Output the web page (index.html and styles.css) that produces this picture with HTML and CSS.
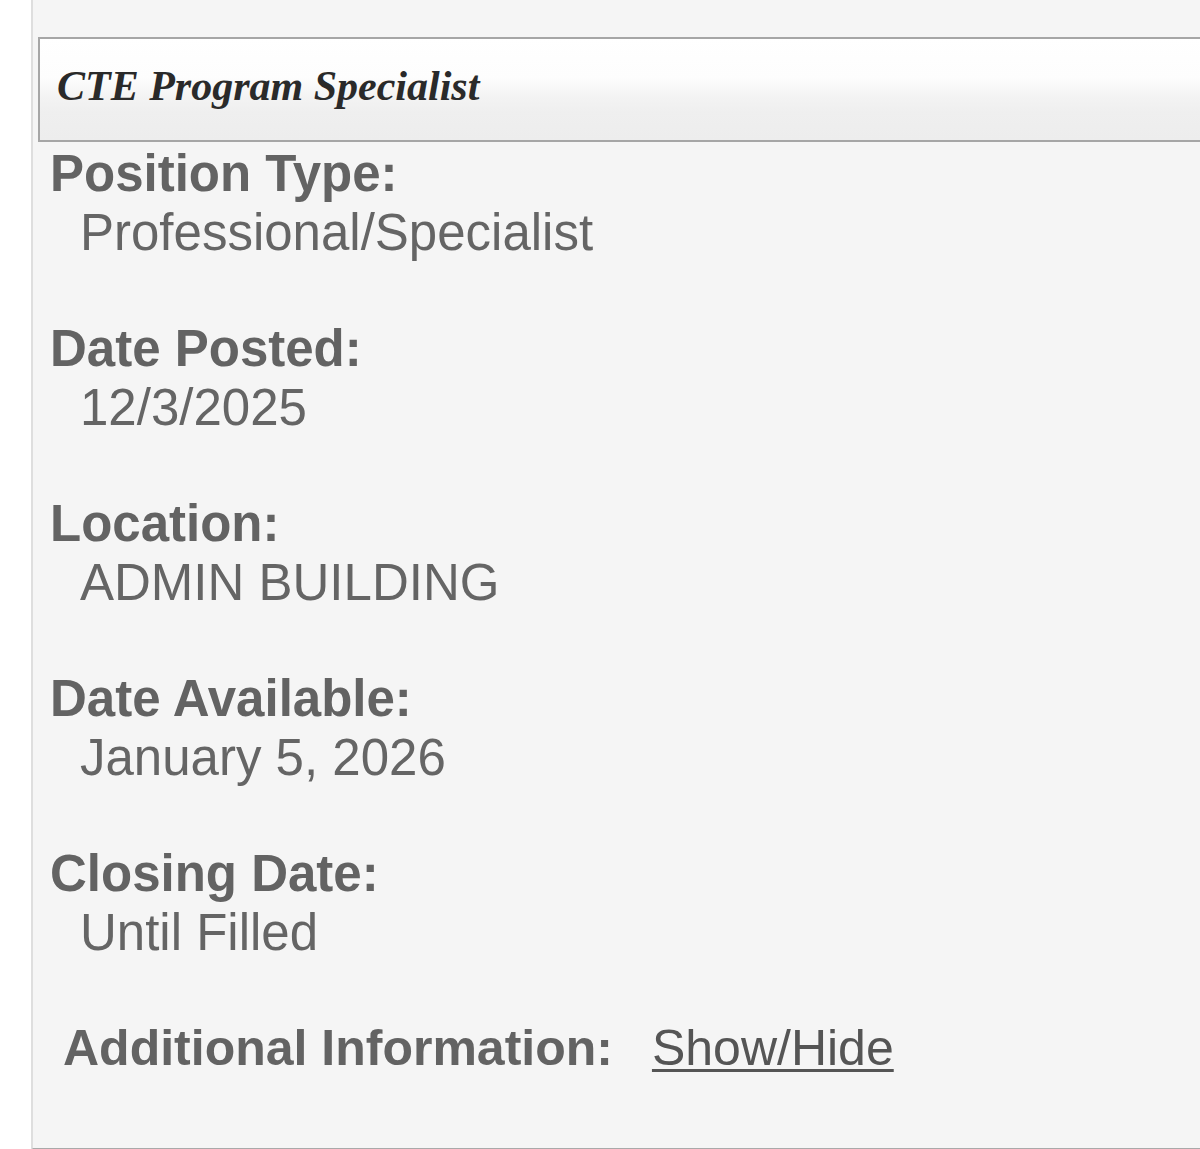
FILE: index.html
```html
<!DOCTYPE html>
<html lang="en">
<head>
<meta charset="utf-8">
<title>CTE Program Specialist</title>
<link rel="stylesheet" href="styles.css">
</head>
<body>
<div class="panel">
  <div class="header">
    <h1 class="title">CTE Program Specialist</h1>
  </div>
  <div class="fields">
    <div class="field">
      <div class="label">Position Type:</div>
      <div class="value">Professional/Specialist</div>
    </div>
    <div class="field">
      <div class="label">Date Posted:</div>
      <div class="value">12/3/2025</div>
    </div>
    <div class="field">
      <div class="label">Location:</div>
      <div class="value">ADMIN BUILDING</div>
    </div>
    <div class="field">
      <div class="label">Date Available:</div>
      <div class="value">January 5, 2026</div>
    </div>
    <div class="field">
      <div class="label">Closing Date:</div>
      <div class="value">Until Filled</div>
    </div>
    <div class="additional">
      <span class="label">Additional Information:</span><a class="toggle" href="#">Show/Hide</a>
    </div>
  </div>
</div>
</body>
</html>
```

FILE: styles.css
```css
html, body {
  margin: 0;
  padding: 0;
  background: #ffffff;
  overflow: hidden;
}

body {
  font-family: "Liberation Sans", Arial, sans-serif;
  color: #666666;
}

.panel {
  margin-left: 31px;
  margin-right: -40px;
  background: #f5f5f5;
  border-left: 2px solid #dedede;
  border-bottom: 2px solid #a9a9a9;
  padding-top: 37px;
  padding-bottom: 70px;
}

.header {
  margin-left: 5px;
  border: 2px solid #a6a6a6;
  background: linear-gradient(to bottom, #ffffff 0%, #fdfdfd 38%, #f3f3f3 58%, #efefef 72%, #ededed 100%);
  padding: 0 0 6px 17px;
}

.title {
  margin: 0;
  font-family: "Liberation Serif", "Times New Roman", serif;
  font-style: italic;
  font-weight: bold;
  font-size: 42px;
  line-height: 95px;
  color: #2a2a2a;
}

.fields {
  padding-left: 17px;
  padding-top: 2px;
  display: flex;
  flex-direction: column;
  gap: 57px;
}

.field {
  font-size: 51px;
  line-height: 59px;
}

.label {
  font-weight: bold;
  color: #636363;
}

.value {
  margin-left: 30px;
  color: #656565;
}

.additional {
  font-size: 50px;
  line-height: 59px;
  padding-left: 13px;
}

.toggle {
  margin-left: 39px;
  color: #555555;
  text-decoration: underline;
  text-decoration-thickness: 3px;
  text-underline-offset: 4px;
}
```
